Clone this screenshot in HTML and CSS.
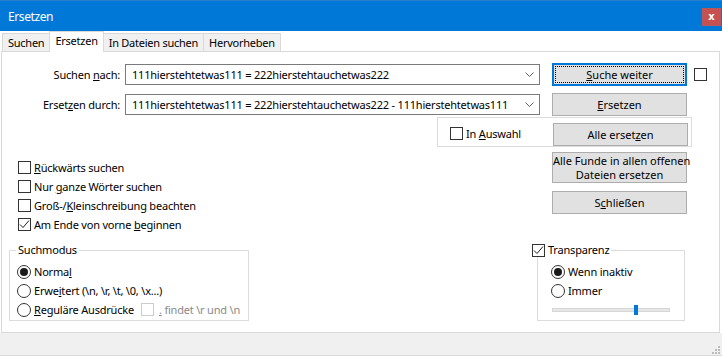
FILE: index.html
```html
<!DOCTYPE html>
<html lang="de">
<head>
    <meta charset="UTF-8">
    <title>Ersetzen</title>
    <link rel="stylesheet" href="styles.css">
</head>
<body>
<div class="window">
    <div class="titlebar">
        <span class="title">Ersetzen</span>
        <button class="close-button">x</button>
    </div>

    <div class="tabs">
        <div class="tab">Suchen</div>
        <div class="tab active">Ersetzen</div>
        <div class="tab">In Dateien suchen</div>
        <div class="tab">Hervorheben</div>
    </div>

    <div class="page">
        <div class="field-row">
            <label class="field-label">Suchen <u>n</u>ach:</label>
            <div class="combo">
                <span>111hierstehtetwas111 = 222hierstehtauchetwas222</span>
                <svg class="chevron" width="9" height="5" viewBox="0 0 9 5"><path d="M0.5 0.5 L4.5 4.5 L8.5 0.5" fill="none" stroke="#606060"/></svg>
            </div>
            <button class="btn focused"><u>S</u>uche weiter</button>
            <span class="box"></span>
        </div>
        <div class="field-row">
            <label class="field-label">Erset<u>z</u>en durch:</label>
            <div class="combo">
                <span>111hierstehtetwas111 = 222hierstehtauchetwas222 - 111hierstehtetwas111</span>
                <svg class="chevron" width="9" height="5" viewBox="0 0 9 5"><path d="M0.5 0.5 L4.5 4.5 L8.5 0.5" fill="none" stroke="#606060"/></svg>
            </div>
            <button class="btn"><u>E</u>rsetzen</button>
        </div>

        <div class="selection-box">
            <label class="check-item"><span class="box"></span><span>In <u>A</u>uswahl</span></label>
            <button class="btn">Alle erset<u>z</u>en</button>
        </div>

        <div class="middle">
            <div class="options">
                <label class="check-item"><span class="box"></span><span><u>R</u>ückwärts suchen</span></label>
                <label class="check-item"><span class="box"></span><span>Nur <u>g</u>anze Wörter suchen</span></label>
                <label class="check-item"><span class="box"></span><span>Groß-/<u>K</u>leinschreibung beachten</span></label>
                <label class="check-item"><span class="box"><svg width="11" height="11" viewBox="0 0 11 11"><path d="M1 5.5 L4 8.5 L10 1.5" fill="none" stroke="#222"/></svg></span><span>Am Ende von vorne <u>b</u>eginnen</span></label>
            </div>
            <div class="side-buttons">
                <button class="btn tall">Alle Funde in allen offenen<br>Dateien ersetzen</button>
                <button class="btn">S<u>c</u>hließen</button>
            </div>
        </div>

        <div class="bottom">
            <fieldset class="group mode-group">
                <legend>Suchmodus</legend>
                <div class="group-body">
                    <label class="radio-item"><span class="radio on"></span><span>Norma<u>l</u></span></label>
                    <label class="radio-item"><span class="radio"></span><span>Erwe<u>i</u>tert (\n, \r, \t, \0, \x...)</span></label>
                    <label class="radio-item"><span class="radio"></span><span><u>R</u>eguläre Ausdrücke</span><span class="box disabled"></span><span class="muted"><u>.</u> findet \r und \n</span></label>
                </div>
            </fieldset>

            <fieldset class="group transparency-group">
                <legend><span class="box"><svg width="11" height="11" viewBox="0 0 11 11"><path d="M1 5.5 L4 8.5 L10 1.5" fill="none" stroke="#222"/></svg></span><span>Transparenz</span></legend>
                <div class="group-body">
                    <label class="radio-item"><span class="radio on"></span><span>Wenn inaktiv</span></label>
                    <label class="radio-item"><span class="radio"></span><span>Immer</span></label>
                    <div class="slider">
                        <div class="slider-thumb"></div>
                    </div>
                </div>
            </fieldset>
        </div>
    </div>

    <div class="statusbar">
        <svg class="grip" width="8" height="8" viewBox="0 0 8 8">
            <rect x="6" y="0" width="2" height="2" fill="#bcbcbc"/>
            <rect x="3" y="3" width="2" height="2" fill="#bcbcbc"/>
            <rect x="6" y="3" width="2" height="2" fill="#bcbcbc"/>
            <rect x="0" y="6" width="2" height="2" fill="#bcbcbc"/>
            <rect x="3" y="6" width="2" height="2" fill="#bcbcbc"/>
            <rect x="6" y="6" width="2" height="2" fill="#bcbcbc"/>
        </svg>
    </div>
</div>
</body>
</html>
```

FILE: styles.css
```css
* {
    box-sizing: border-box;
}

body {
    margin: 0;
    font-family: "Noto Sans", "Liberation Sans", sans-serif;
    font-size: 11px;
    letter-spacing: -0.2px;
    color: #000;
    background: #fff;
}

.window {
    width: 722px;
    height: 357px;
    display: flex;
    flex-direction: column;
}

/* Title bar */
.titlebar {
    height: 31px;
    flex-shrink: 0;
    background: #0078d7;
    border-top: 1px solid #2c7fcd;
    display: flex;
    align-items: center;
    justify-content: space-between;
    padding: 0 1px 0 8px;
}
.title {
    color: #fff;
    font-size: 12px;
    letter-spacing: -0.4px;
}
.close-button {
    width: 19px;
    height: 18px;
    margin-top: 2px;
    padding: 0;
    background: #c75050;
    border: 1px solid #b9585c;
    color: #fff;
    font: bold 10px "DejaVu Sans", sans-serif;
    line-height: 14px;
}

/* Tabs */
.tabs {
    height: 20px;
    flex-shrink: 0;
    display: flex;
    align-items: flex-end;
    padding-left: 2px;
}
.tab {
    height: 18px;
    line-height: 17px;
    padding: 0 5px;
    letter-spacing: -0.25px;
    background: #f0f0f0;
    border: 1px solid #d9d9d9;
    border-bottom: none;
    margin-left: -1px;
}
.tab:first-child {
    margin-left: 0;
}
.tab.active {
    height: 21px;
    line-height: 17px;
    padding: 0 5px;
    margin-bottom: -1px;
    background: #fff;
    position: relative;
    z-index: 1;
}

/* Tab page */
.page {
    height: 282px;
    flex-shrink: 0;
    margin: 0 2px 0 1px;
    border: 1px solid #d9d9d9;
    padding-top: 11px;
}

.field-row {
    display: flex;
    align-items: center;
    height: 23px;
}
.field-row + .field-row {
    margin-top: 7px;
}
.field-label {
    width: 118px;
    margin-right: 5px;
    text-align: right;
}
.combo {
    width: 415px;
    height: 21px;
    border: 1px solid #7a7a7a;
    display: flex;
    align-items: center;
    justify-content: space-between;
    padding: 0 5px 0 6px;
    white-space: nowrap;
}

.btn {
    width: 135px;
    height: 23px;
    margin-left: 12px;
    padding: 0;
    background: #e1e1e1;
    border: 1px solid #adadad;
    font: inherit;
    color: #000;
    white-space: nowrap;
}
.btn.focused {
    border: 2px solid #0078d7;
    outline: 1px dotted #000;
    outline-offset: -4px;
}
.btn.tall {
    height: 31px;
    line-height: 14px;
}

.box {
    width: 13px;
    height: 13px;
    flex-shrink: 0;
    border: 1px solid #333;
    background: #fff;
    display: inline-flex;
    align-items: center;
    justify-content: center;
}
.field-row .box {
    margin-left: 7px;
}
.box.disabled {
    border-color: #cccccc;
    margin: 0 2px 0 4px;
}

.check-item,
.radio-item {
    display: flex;
    align-items: center;
    gap: 3px;
    height: 19px;
    white-space: nowrap;
}

.selection-box {
    width: 255px;
    height: 30px;
    margin: 1px 0 0 435px;
    border: 1px solid #dcdcdc;
    display: flex;
    align-items: flex-start;
    padding: 5px 3px 0 12px;
}
.selection-box .check-item {
    margin-top: 1px;
}
.selection-box .btn {
    margin-left: auto;
}

.middle {
    display: flex;
    margin-top: 3px;
}
.options {
    width: 538px;
    padding: 8px 0 0 16px;
}
.side-buttons {
    display: flex;
    flex-direction: column;
    gap: 8px;
    padding-top: 2px;
}

/* Group boxes */
.bottom {
    display: flex;
    margin-top: 9px;
    padding-left: 7px;
}
.group {
    margin: 0;
    padding: 0;
    border: 1px solid #dcdcdc;
    min-width: 0;
}
.group legend {
    line-height: 14px;
    padding: 0 2px;
    margin-left: 6px;
    display: flex;
    align-items: center;
    gap: 3px;
}
.group-body {
    padding: 5px 0 0 7px;
}
.mode-group {
    width: 240px;
    height: 78px;
}
.transparency-group {
    width: 148px;
    height: 78px;
    margin-left: 288px;
}
.transparency-group legend {
    margin-left: -8px;
}
.transparency-group .group-body {
    padding-left: 13px;
}

.radio {
    width: 14px;
    height: 14px;
    flex-shrink: 0;
    border: 1px solid #333;
    border-radius: 50%;
    background: #fff;
    display: inline-flex;
    align-items: center;
    justify-content: center;
}
.radio.on::after {
    content: "";
    width: 8px;
    height: 8px;
    border-radius: 50%;
    background: #1a1a1a;
}
.muted {
    color: #8a8a8a;
}

.slider {
    position: relative;
    width: 118px;
    height: 4px;
    margin: 8px 0 0 1px;
    background: #e7e7e7;
    border: 1px solid #d6d6d6;
}
.slider-thumb {
    position: absolute;
    left: 81px;
    top: -4px;
    width: 4px;
    height: 10px;
    background: #0078d7;
}

/* Status bar */
.statusbar {
    height: 23px;
    flex-shrink: 0;
    background: #f0f0f0;
    border-bottom: 1px solid #d9d9d9;
    display: flex;
    justify-content: flex-end;
    align-items: flex-end;
    padding: 0 2px 1px 0;
}
```
